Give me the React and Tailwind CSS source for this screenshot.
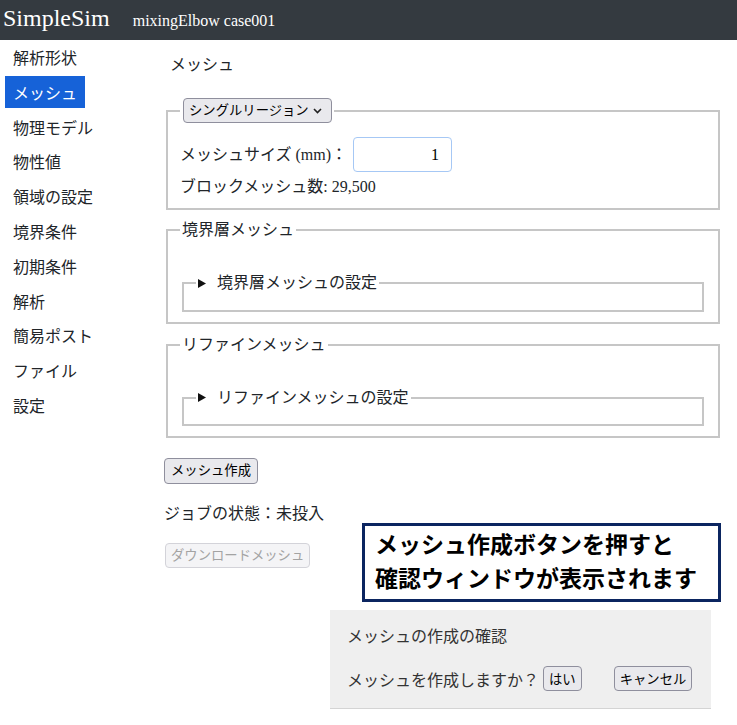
import React from "react";

const navItems = [
  "解析形状",
  "メッシュ",
  "物理モデル",
  "物性値",
  "領域の設定",
  "境界条件",
  "初期条件",
  "解析",
  "簡易ポスト",
  "ファイル",
  "設定",
];

function Marker() {
  return (
    <svg width="8" height="9" viewBox="0 0 8 9" className="shrink-0">
      <path d="M0 0 L8 4.5 L0 9 Z" fill="#111" />
    </svg>
  );
}

export default function App() {
  return (
    <div className="relative w-[737px] h-[725px] overflow-hidden bg-white text-[#212529] [font-family:'Liberation_Serif','Noto_Sans_CJK_JP',serif]">
      <header className="h-[40px] bg-[#343a40] flex items-baseline text-white">
        <span className="pl-[3px] text-[24px] leading-[36px]">SimpleSim</span>
        <span className="ml-[23px] text-[16px] leading-[36px]">mixingElbow case001</span>
      </header>

      <div className="flex">
        <nav className="w-[164px] shrink-0 pl-[5px] pt-[1px] flex flex-col gap-[2.8px] text-[16px] [font-family:'Noto_Sans_CJK_JP',sans-serif]">
          {navItems.map((it) =>
            it === "メッシュ" ? (
              <div key={it} className="self-start h-[32px] px-[8px] flex items-center bg-[#1662d8] text-white">
                {it}
              </div>
            ) : (
              <div key={it} className="self-start h-[32px] px-[8px] flex items-center text-[#212529]">
                {it}
              </div>
            )
          )}
        </nav>

        <main className="flex-1 pr-[15px] pt-[13px]">
          <div className="pl-[6px] text-[16px] leading-[24px]">メッシュ</div>

          <fieldset className="mt-[21px] mx-[2px] border-2 border-solid border-[#c6c6c6] px-[12px] pt-[14px] pb-[10px]">
            <legend className="px-[2px]">
              <div className="ml-[1px] h-[25px] w-[149px] flex items-center justify-between pl-[5px] pr-[9px] bg-[#e9e9ed] border border-[#8f8f9d] rounded-[4px] text-[13.33px] text-black [font-family:'Liberation_Sans','Noto_Sans_CJK_JP',sans-serif]">
                <span>シングルリージョン</span>
                <svg width="9" height="6" viewBox="0 0 9 6">
                  <path d="M1 1 L4.5 4.5 L8 1" fill="none" stroke="#222" strokeWidth="1.6" />
                </svg>
              </div>
            </legend>
            <div className="flex items-center gap-[6px] text-[16px]">
              <span>メッシュサイズ (mm)：</span>
              <div className="h-[35px] w-[99px] border border-[#a6c8f5] rounded-[4px] flex items-center justify-end pr-[12px] text-[16px] text-black">
                1
              </div>
            </div>
            <div className="mt-[4px] text-[16px] leading-[22px]">ブロックメッシュ数: 29,500</div>
          </fieldset>

          <fieldset className="mt-[8px] mx-[2px] border-2 border-solid border-[#c6c6c6] px-[12px] pt-[30px] pb-[10px]">
            <legend className="px-[2px] text-[16px] leading-[24px]">境界層メッシュ</legend>
            <fieldset className="mx-[2px] border-2 border-solid border-[#c6c6c6] px-[12px] pt-[5.6px] pb-[10px]">
              <legend className="px-[2px] text-[16px] leading-[22px]">
                <div className="flex items-center">
                  <Marker />
                  <span className="ml-[11px]">境界層メッシュの設定</span>
                </div>
              </legend>
            </fieldset>
          </fieldset>

          <fieldset className="mt-[9px] mx-[2px] border-2 border-solid border-[#c6c6c6] px-[12px] pt-[30px] pb-[10px]">
            <legend className="px-[2px] text-[16px] leading-[24px]">リファインメッシュ</legend>
            <fieldset className="mx-[2px] border-2 border-solid border-[#c6c6c6] px-[12px] pt-[5.6px] pb-[10px]">
              <legend className="px-[2px] text-[16px] leading-[22px]">
                <div className="flex items-center">
                  <Marker />
                  <span className="ml-[11px]">リファインメッシュの設定</span>
                </div>
              </legend>
            </fieldset>
          </fieldset>

          <div className="mt-[20px] h-[26px] w-fit px-[6px] flex items-center bg-[#e9e9ed] border border-[#8f8f9d] rounded-[4px] text-[13.33px] text-black [font-family:'Liberation_Sans','Noto_Sans_CJK_JP',sans-serif]">
            メッシュ作成
          </div>

          <div className="mt-[18px] text-[16px] leading-[24px]">ジョブの状態：未投入</div>

          <div className="mt-[17px] ml-[1px] h-[25px] w-fit px-[5px] flex items-center bg-[#f4f4f6] border border-[#d3d3d9] rounded-[4px] text-[13.33px] text-[#a3a3a3] [font-family:'Liberation_Sans','Noto_Sans_CJK_JP',sans-serif]">
            ダウンロードメッシュ
          </div>
        </main>
      </div>

      <div className="absolute left-[362px] top-[523px] w-[359px] h-[79px] border-[3px] border-[#0b2560] bg-white pl-[10px] text-[23px] leading-[34px] font-bold text-black [font-family:'Noto_Sans_CJK_JP',sans-serif]">
        <div>メッシュ作成ボタンを押すと</div>
        <div>確認ウィンドウが表示されます</div>
      </div>

      <div className="absolute left-[330px] top-[610px] w-[381px] h-[99px] bg-[#efefef] border-b border-[#d4d4d4] pl-[17px] pt-[13px] text-[16px] text-[#333] [font-family:'Noto_Sans_CJK_JP',sans-serif]">
        <div className="leading-[24px]">メッシュの作成の確認</div>
        <div className="mt-[19px] flex items-center">
          <span className="leading-[24px]">メッシュを作成しますか？</span>
          <div className="ml-[4px] h-[25px] px-[5px] flex items-center bg-[#e9e9ed] border border-[#8f8f9d] rounded-[4px] text-[13.33px] text-black">
            はい
          </div>
          <div className="ml-[32px] h-[25px] px-[5px] flex items-center bg-[#e9e9ed] border border-[#8f8f9d] rounded-[4px] text-[13.33px] text-black">
            キャンセル
          </div>
        </div>
      </div>
    </div>
  );
}
